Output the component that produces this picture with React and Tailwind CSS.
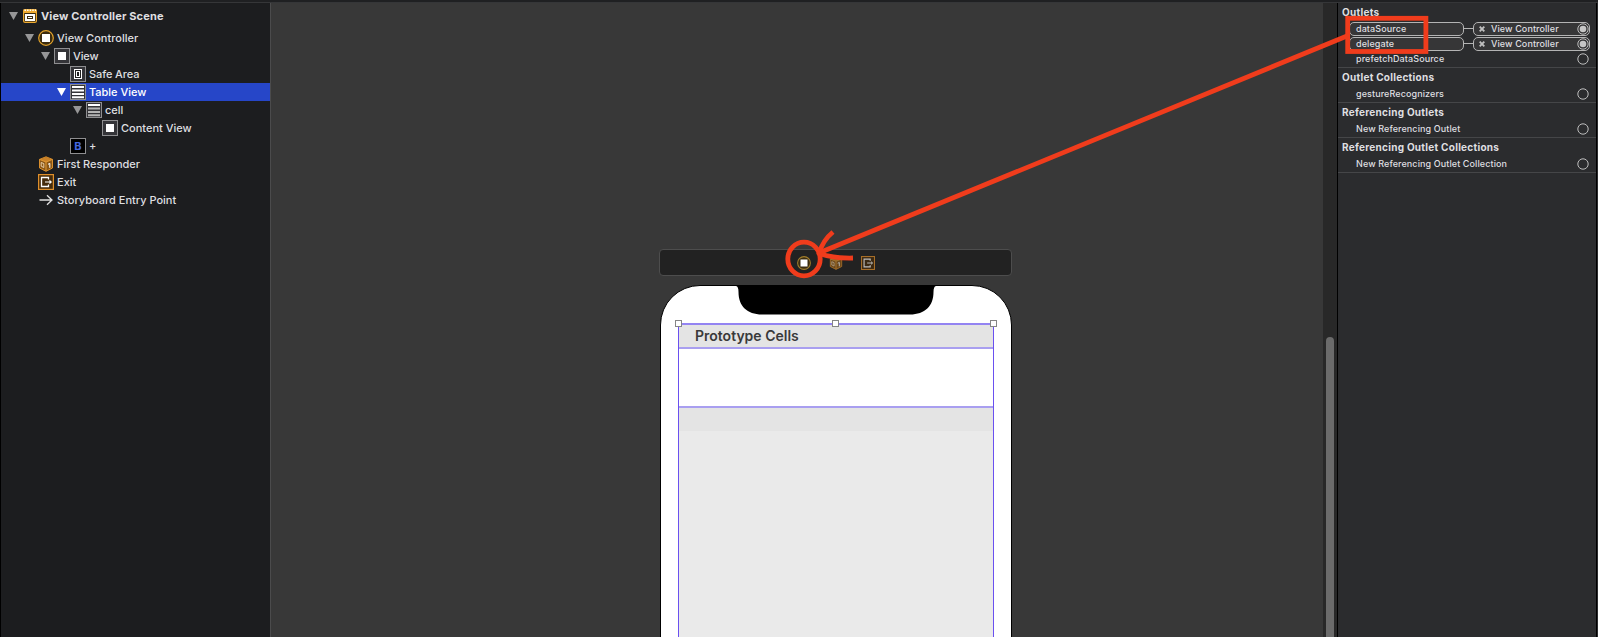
const font = "font-[Inter,'Liberation_Sans',sans-serif]";

function Disclosure({ selected }) {
  return (
    <svg width="9" height="8" viewBox="0 0 9 8" className="shrink-0">
      <path d="M0 0H9L4.5 8Z" fill={selected ? "#ffffff" : "#969697"} />
    </svg>
  );
}

function Lines({ dim }) {
  const c = dim ? "#b4b4b4" : "#ffffff";
  return (
    <svg width="16" height="16" viewBox="0 0 16 16">
      <rect x=".5" y=".5" width="15" height="15" fill="#343438" stroke="#8e8e90" />
      <path d="M2 3H14" stroke="#fff" strokeWidth="2" />
      <path d="M2 6.5H14M2 10H14M2 13.2H14" stroke={c} strokeWidth="2" />
    </svg>
  );
}

function Square() {
  return (
    <svg width="16" height="16" viewBox="0 0 16 16">
      <rect x=".5" y=".5" width="15" height="15" fill="#343438" stroke="#8e8e90" />
      <rect x="4" y="4" width="8" height="8" fill="#fff" />
    </svg>
  );
}

function ControllerIcon({ size = 16, muted }) {
  return (
    <svg width={size} height={size} viewBox="0 0 16 16">
      <circle cx="8" cy="8" r="7.3" fill="#3b2c10" stroke={muted ? "#a27f2c" : "#e3a32b"} strokeWidth="1.2" />
      <rect x="4" y="4" width="8" height="8" fill="#fff" />
    </svg>
  );
}

function SceneIcon() {
  return (
    <svg width="14" height="14" viewBox="0 0 14 14">
      <rect x=".6" y=".6" width="12.8" height="12.800" rx="1.500" fill="#3b2c10" stroke="#eeaa30" strokeWidth="1.200" />
      <rect x=".5" y=".5" width="13" height="3.500" fill="#eeaa30" />
      <path d="M1.500 1.200H13" stroke="#fff" strokeWidth="1.400" strokeDasharray="1.400 1.200" />
      <rect x="2" y="5" width="10" height="7" fill="#fff" />
      <rect x="4.500" y="7.500" width="5" height="2" fill="#fff" stroke="#3b2c10" />
    </svg>
  );
}

function SafeAreaIcon() {
  return (
    <svg width="16" height="16" viewBox="0 0 16 16">
      <rect x=".5" y=".5" width="15" height="15" fill="#343438" stroke="#8e8e90" />
      <rect x="4.5" y="3.5" width="7" height="9" fill="#222" stroke="#fff" />
      <rect x="6.5" y="5.5" width="3" height="5" fill="none" stroke="#fff" />
    </svg>
  );
}

function ResponderIcon({ size = 16 }) {
  return (
    <svg width={size} height={size} viewBox="0 0 16 16">
      <path d="M8 .8L14.5 3.4V12L8 15.3L1.5 12V3.4Z" fill="#8b5817" stroke="#d98e2c" />
      <path d="M8 1L14 3.500L8 6L2 3.500Z" fill="#c98229" />
      <path d="M1.5 3.4L8 6L14.5 3.4M8 6V15" fill="none" stroke="#e39a35" />
      <path d="M3.2 6.5L5.8 7.6V11.5L3.2 10.2Z" fill="none" stroke="#f3d9b2" strokeWidth=".9" />
      <path d="M10 8.3L11.8 7.4V11.8" fill="none" stroke="#fff" />
    </svg>
  );
}

function ExitIcon({ size = 16 }) {
  return (
    <svg width={size} height={size} viewBox="0 0 16 16">
      <rect x=".6" y=".6" width="14.8" height="14.8" fill="#452c0d" stroke="#df8f2b" strokeWidth="1.2" />
      <path d="M10.500 5.500V3.500H3.500V12.500H10.500V10.500" fill="none" stroke="#fff" strokeWidth="1.300" />
      <path d="M7 8H13M11.500 6.500L13.200 8L11.500 9.500" fill="none" stroke="#fff" strokeWidth="1.100" />
    </svg>
  );
}

function ButtonIcon() {
  return (
    <span className="flex size-4 items-center justify-center border border-[#8e8e90] bg-black text-[11px] leading-none font-bold text-[#4468e0]">
      B
    </span>
  );
}

function EntryIcon() {
  return (
    <svg width="16" height="16" viewBox="0 0 16 16">
      <path d="M1.5 8H14M9 3.2L14 8L9 12.8" fill="none" stroke="#e0e0e0" strokeWidth="1.3" />
    </svg>
  );
}

const tree = [
  { label: "View Controller", icon: <ControllerIcon />, pad: "pl-6", tracking: "tracking-[0.03px]", open: true },
  { label: "View", icon: <Square />, pad: "pl-10", tracking: "tracking-[-0.1px]", open: true },
  { label: "Safe Area", icon: <SafeAreaIcon />, pad: "pl-14", tracking: "tracking-[-0.1px]" },
  { label: "Table View", icon: <Lines />, pad: "pl-14", tracking: "tracking-[-0.03px]", open: true, selected: true },
  { label: "cell", icon: <Lines dim />, pad: "pl-[72px]", tracking: "tracking-[0px]", open: true },
  { label: "Content View", icon: <Square />, pad: "pl-[88px]", tracking: "tracking-[0px]" },
  { label: "+", icon: <ButtonIcon />, pad: "pl-14", tracking: "tracking-[0px]" },
  { label: "First Responder", icon: <ResponderIcon />, pad: "pl-6", tracking: "tracking-[0px]" },
  { label: "Exit", icon: <ExitIcon />, pad: "pl-6", tracking: "tracking-[0px]" },
  { label: "Storyboard Entry Point", icon: <EntryIcon />, pad: "pl-6", tracking: "tracking-[0px]" },
];

function Outline() {
  return (
    <aside className="w-[271px] shrink-0 border-r border-l border-r-[#4b4b4c] border-l-black bg-[#1c1d1f] text-[11px] font-medium text-[#dfdfe0]">
      <div className="flex h-[26px] items-center pl-2 font-bold tracking-[0.15px]">
        <Disclosure />
        <span className="mr-1 ml-[5px]">
          <SceneIcon />
        </span>
        <span>View Controller Scene</span>
      </div>
      {tree.map((n) => (
        <div
          key={n.label}
          className={`flex h-[18px] items-center ${n.pad} ${n.selected ? "bg-[#2646c8] text-white" : ""}`}
        >
          <span className="mr-1 flex w-[9px] shrink-0">{n.open && <Disclosure selected={n.selected} />}</span>
          <span className="mr-[3px] shrink-0">{n.icon}</span>
          <span className={`whitespace-nowrap ${n.tracking}`}>{n.label}</span>
        </div>
      ))}
    </aside>
  );
}

function Handle({ place }) {
  return <span className={`absolute -top-[5px] size-[7px] border border-[#858585] bg-white ${place}`} />;
}

function Canvas() {
  return (
    <main className="flex min-w-0 flex-1 flex-col items-center overflow-hidden bg-[#383838] pl-[78px] pt-[246px]">
      <div className="mr-[2px] flex h-[27px] w-[353px] shrink-0 items-center justify-center gap-[18px] rounded-[4px] border border-[#4d4d4d] bg-[#222222] pl-[2px]">
        <ControllerIcon size={14} muted />
        <span className="opacity-70">
          <ResponderIcon size={14} />
        </span>
        <span className="opacity-70">
          <ExitIcon size={14} />
        </span>
      </div>
      <div className="relative mt-[9px] flex h-[420px] w-[352px] shrink-0 flex-col rounded-t-[40px] border border-black bg-white px-[17px] pt-[37px]">
        <svg width="200" height="30" viewBox="0 0 200 30" className="absolute -top-px left-[75px]">
          <path d="M0 0H200V1Q197.500 1.500 197.500 7C197.500 21 189 29.500 174 29.500H26C11 29.500 2.500 21 2.500 7Q2.500 1.500 0 1Z" fill="#000" />
        </svg>
        <div className="relative flex flex-1 flex-col border-x border-t-2 border-x-[#6a50f0] border-t-[#9384f2] bg-[#eaeaea]">
          <div className="flex h-[22px] items-center bg-[#e4e4e4] pl-4 text-[14px] font-semibold text-[#3a3a3a]">
            <span className="-mt-[2px]">Prototype Cells</span>
          </div>
          <div className="h-[61px] border-y-2 border-[#a99ff0] bg-white" />
          <div className="h-[23px] bg-[#e4e4e4]" />
          <Handle place="-left-[4px]" />
          <Handle place="left-[153px]" />
          <Handle place="-right-[4px]" />
        </div>
      </div>
    </main>
  );
}

function Well({ filled }) {
  return (
    <svg width="12" height="12" viewBox="0 0 12 12" className="shrink-0">
      <circle cx="6" cy="6" r="5.200" fill="none" stroke="#bdbdbd" />
      {filled && <circle cx="6" cy="6" r="3.300" fill="#c6c6c6" />}
    </svg>
  );
}

const sections = [
  {
    title: "Outlets",
    rows: [
      { name: "dataSource", target: "View Controller" },
      { name: "delegate", target: "View Controller" },
      { name: "prefetchDataSource" },
    ],
  },
  { title: "Outlet Collections", rows: [{ name: "gestureRecognizers" }] },
  { title: "Referencing Outlets", rows: [{ name: "New Referencing Outlet" }] },
  { title: "Referencing Outlet Collections", rows: [{ name: "New Referencing Outlet Collection" }] },
];

function OutletRow({ name, target }) {
  if (!target) {
    return (
      <div className="flex h-[15px] items-center justify-between pr-[7px] pl-[18px]">
        <span>{name}</span>
        <Well />
      </div>
    );
  }
  return (
    <div className="flex h-[15px] items-center pl-[11px]">
      <div className="flex h-[14px] w-[115px] items-center rounded-[5px] border border-[#b4b4b4] bg-[#363637] pl-[6px]">{name}</div>
      <div className="h-px w-[9px] bg-[#b4b4b4]" />
      <div className="flex h-[14px] w-[117px] items-center rounded-[5px] border border-[#b4b4b4] bg-[#363637] pl-[5px]">
        <svg width="6" height="6" viewBox="0 0 6 6" className="mr-[6px]">
          <path d="M.7 .7L5.300 5.300M5.300 .7L.7 5.300" stroke="#c0c0c0" strokeWidth="1.900" />
        </svg>
        <span className="flex-1">{target}</span>
        <Well filled />
      </div>
    </div>
  );
}

function Inspector() {
  return (
    <aside className="w-[260px] shrink-0 border-r border-l border-black bg-[#2b2c2e] text-[9px] font-medium tracking-[0.1px] text-[#dfdfe0]">
      {sections.map((s) => (
        <section key={s.title} className="border-b border-[#454648] pb-px">
          <h2 className="flex h-[18px] items-center pl-1 text-[10px] font-bold tracking-[0.27px]">{s.title}</h2>
          {s.rows.map((r) => (
            <OutletRow key={r.name} {...r} />
          ))}
        </section>
      ))}
    </aside>
  );
}

function Annotations() {
  return (
    <svg width="1598" height="637" viewBox="0 0 1598 637" className="pointer-events-none absolute inset-0">
      <g fill="none" stroke="#f03c1c" strokeWidth="4.800">
        <rect x="1347.700" y="18.300" width="78.200" height="33.200" />
        <path d="M1347 36L820 252.500" />
        <path d="M833 232Q823 240 819 253.500Q834 258.500 853 258" strokeLinejoin="round" />
        <ellipse cx="804" cy="259" rx="16.200" ry="16.800" />
      </g>
    </svg>
  );
}

export default function App() {
  return (
    <div className={`relative flex h-[637px] w-[1598px] flex-col overflow-hidden bg-[#1c1d1f] ${font}`}>
      <div className="h-[3px] shrink-0 border-b border-[#353638] bg-[#1f2022]" />
      <div className="flex min-h-0 flex-1">
        <Outline />
        <Canvas />
        <div className="w-[14px] shrink-0 bg-[#282828] pt-[334px] pl-[3px]">
          <div className="h-full w-2 rounded-t-full bg-[#6b6b6b]" />
        </div>
        <Inspector />
        <div className="w-px bg-[#2b2c2e]" />
      </div>
      <Annotations />
    </div>
  );
}
